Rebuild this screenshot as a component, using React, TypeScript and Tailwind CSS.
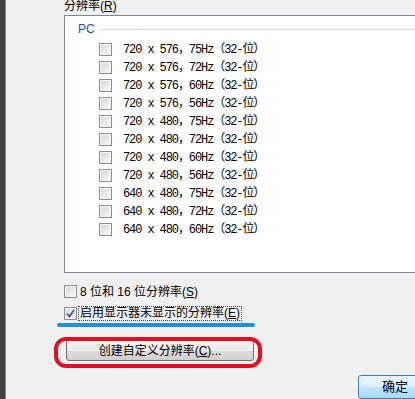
const rows = [
  ["720 x 576", "75Hz"],
  ["720 x 576", "72Hz"],
  ["720 x 576", "60Hz"],
  ["720 x 576", "56Hz"],
  ["720 x 480", "75Hz"],
  ["720 x 480", "72Hz"],
  ["720 x 480", "60Hz"],
  ["720 x 480", "56Hz"],
  ["640 x 480", "75Hz"],
  ["640 x 480", "72Hz"],
  ["640 x 480", "60Hz"],
];

const cjk = { fontFamily: '"Liberation Sans", "Noto Sans CJK SC", sans-serif' };
const mono = { fontFamily: '"Liberation Mono", "Noto Sans CJK SC", monospace' };

const Box = ({ checked = false }: { checked?: boolean }) => (
  <div className="w-[13px] h-[13px] shrink-0 border border-[#8e8f8f] bg-gradient-to-br from-[#d6d6d6] to-[#fafafa] shadow-[inset_0_0_0_1px_#f4f4f4] flex items-center justify-center">
    {checked && (
      <svg width="9" height="9" viewBox="0 0 9 9">
        <path d="M1 4.5 L3.5 7.5 L8 1" fill="none" stroke="#3a5ba8" strokeWidth="1.8" />
      </svg>
    )}
  </div>
);

export default function App() {
  return (
    <div className="w-[415px] h-[399px] flex overflow-hidden bg-[#f0f0f0] text-[12px] text-black" style={cjk}>
      <div className="w-[5px] bg-[#404040]" />
      <div className="w-[1px] bg-[#8a8a8a]" />
      <div className="flex-1 relative pl-[58px] flex flex-col">
        <div className="h-[13px] leading-[12px]">
          分辨率(<span className="underline">R</span>)
        </div>
        <div className="h-[260px] mt-[2px] -mr-[4px] bg-white border border-[#828790] border-r-0 flex flex-col">
          <div className="flex items-center pl-[13px] pt-[5px] h-[22px]">
            <span className="text-[#1e4fa3] text-[12px] leading-[12px]">PC</span>
            <div className="flex-1 h-[1px] bg-[#d5dbe0] ml-[5px]" />
          </div>
          <div className="flex flex-col pl-[34px] mt-[3px]">
            {rows.map(([res, hz], i) => (
              <div key={i} className="h-[18px] flex items-center gap-[11px]">
                <Box />
                <span className="text-[12px] whitespace-pre leading-[12px] tracking-[-1.1px]" style={mono}>
                  {res}，{hz}（32-位）
                </span>
              </div>
            ))}
          </div>
        </div>
        <div className="mt-[12px] h-[13px] flex items-center gap-[3px]">
          <Box />
          <span className="leading-[12px]">8 位和 16 位分辨率(<span className="underline">S</span>)</span>
        </div>
        <div className="mt-[9px] h-[13px] flex items-center gap-[1px]">
          <Box checked />
          <span className="leading-[13px] border border-dotted border-[#444] px-[1px]">
            启用显示器未显示的分辨率(<span className="underline">E</span>)
          </span>
        </div>
        <div className="mt-[20px] ml-[2px] w-[188px] h-[21px] rounded-[3px] border border-[#707070] bg-[linear-gradient(#f2f2f2_0%,#ebebeb_50%,#dddddd_51%,#cfcfcf_100%)] flex items-center justify-center leading-[12px]">
          创建自定义分辨率(<span className="underline">C</span>)...
        </div>
        <div className="mt-[14px] self-end -mr-[17px] w-[74px] h-[24px] rounded-[3px] border border-[#3c7fb1] bg-[linear-gradient(#eaf6fd_0%,#d9f0fc_50%,#bee6fd_51%,#a7d9f5_100%)] flex items-center justify-center text-[13px]">
          确定
        </div>
        <div className="absolute left-[51px] top-[323px] w-[198px] h-[4px] rounded-full bg-[#1b95d8]" />
        <div className="absolute left-[48px] top-[337px] w-[208px] h-[31px] rounded-[12px] border-[4px] border-[#e2101e]" />
      </div>
    </div>
  );
}
